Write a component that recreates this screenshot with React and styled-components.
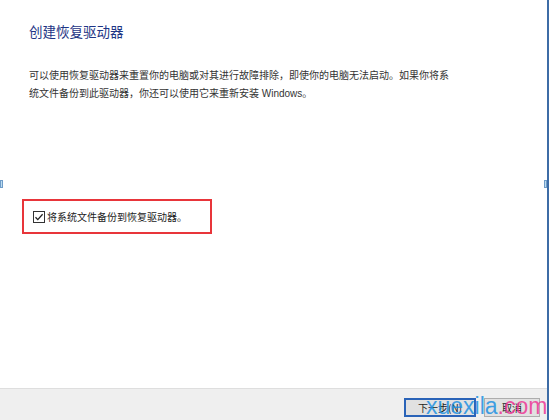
import styled, { createGlobalStyle } from 'styled-components'

const GlobalStyle = createGlobalStyle`
    html, body {
        margin: 0;
        padding: 0;
        background: #ffffff;
    }
    body {
        font-family: "Noto Sans CJK SC", "Liberation Sans", sans-serif;
    }
`

function CheckIcon() {
    return (
        <svg width="12" height="12" viewBox="0 0 12 12">
            <rect x="0.5" y="0.5" width="11" height="11" fill="#fff" stroke="#333" />
            <path d="M2.5 6.2 L4.8 8.6 L9.6 3.2" fill="none" stroke="#222" strokeWidth="1.3" />
        </svg>
    )
}

function App() {
    return (
        <>
            <GlobalStyle />
            <Window>
                <Content>
                    <Title>创建恢复驱动器</Title>
                    <Description>
                        可以使用恢复驱动器来重置你的电脑或对其进行故障排除，即使你的电脑无法启动。如果你将系
                        <br />
                        统文件备份到此驱动器，你还可以使用它来重新安装 Windows。
                    </Description>
                    <OptionBox>
                        <CheckLabel>
                            <CheckIcon />
                            <span>将系统文件备份到恢复驱动器。</span>
                        </CheckLabel>
                    </OptionBox>
                </Content>
                <Footer>
                    <Button $primary>下一步(N)</Button>
                    <Button>取消</Button>
                </Footer>
                <Grip $side="left" />
                <Grip $side="right" />
                <Watermark>
                    <span>xuexila</span>
                    <Dot>.com</Dot>
                </Watermark>
            </Window>
        </>
    )
}

export default App

const Window = styled.div`
    position: relative;
    width: 547px;
    height: 420px;
    border-right: 2px solid #3d6ca6;
    display: flex;
    flex-direction: column;
    background: #fff;
    overflow: hidden;
`

const Content = styled.div`
    flex: 1;
    padding: 21px 0 0 29px;
`

const Title = styled.h1`
    margin: 0;
    font-size: 13.5px;
    font-weight: normal;
    color: #1e3585;
    line-height: 20px;
`

const Description = styled.p`
    margin: 26px 0 0;
    font-family: "Liberation Sans", "Noto Sans CJK SC", sans-serif;
    font-size: 10px;
    line-height: 18px;
    color: #333;
    white-space: nowrap;
`

const OptionBox = styled.div`
    margin: 96px 0 0 -7px;
    width: 177px;
    height: 31px;
    border: 2px solid #e8353a;
    display: flex;
    align-items: center;
    padding-left: 9px;
    box-sizing: content-box;
`

const CheckLabel = styled.label`
    display: flex;
    align-items: center;
    gap: 2px;
    font-size: 10px;
    color: #222;

    svg {
        flex: none;
    }
`

const Footer = styled.div`
    height: 31px;
    background: #efefef;
    border-top: 1px solid #dedede;
    display: flex;
    justify-content: flex-end;
    align-items: center;
    gap: 8px;
    padding-right: 7px;
`

const Button = styled.button`
    width: ${p => (p.$primary ? '72px' : '56px')};
    height: 19px;
    padding: 0;
    margin-top: 6px;
    font-family: inherit;
    font-size: 10px;
    color: #222;
    background: #e1e1e1;
    border: ${p => (p.$primary ? '2px solid #2a63b8' : '1px solid #adadad')};
    box-sizing: border-box;
`

const Grip = styled.div`
    position: absolute;
    top: 180px;
    ${p => (p.$side === 'left' ? 'left: 0;' : 'right: 0;')}
    width: 3px;
    height: 8px;
    background: #bcdcf0;
    border: 1px solid #6f9cc8;
    box-sizing: border-box;
`

const Watermark = styled.div`
    position: absolute;
    left: 426px;
    top: 393px;
    font-family: "Liberation Sans", sans-serif;
    font-size: 23px;
    line-height: 26px;
    color: rgba(30, 145, 225, 0.85);
    pointer-events: none;
`

const Dot = styled.span`
    color: rgba(238, 55, 150, 0.85);
`
